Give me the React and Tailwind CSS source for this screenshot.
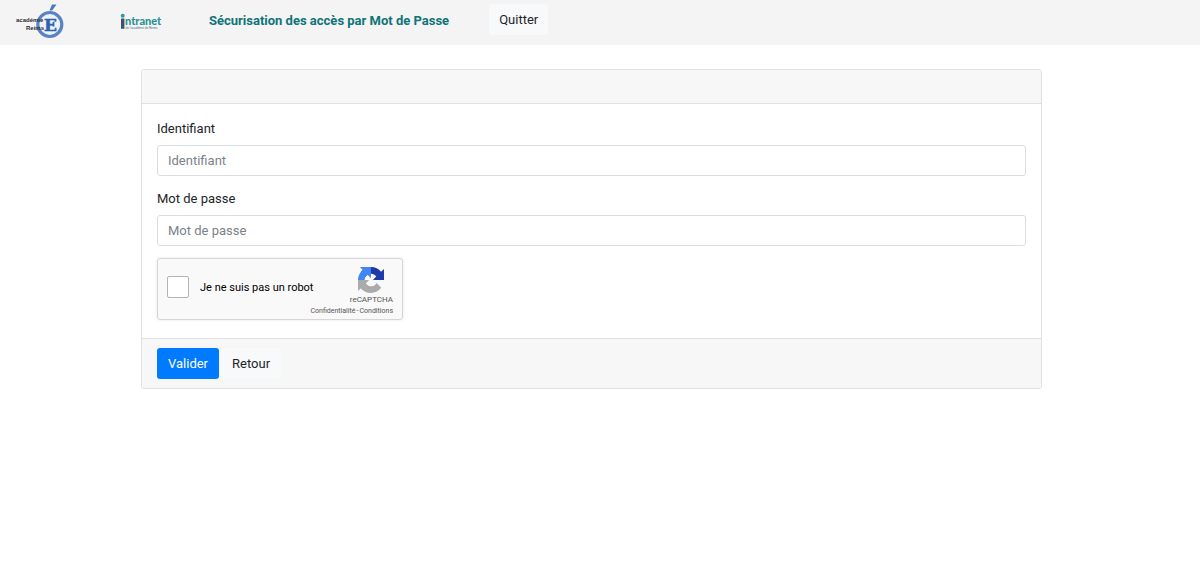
function AcademieLogo() {
  return (
    <svg width="52" height="38" viewBox="0 0 52 38" role="img" aria-label="académie Reims">
      <circle cx="33.8" cy="20.5" r="12" fill="#eef3fa" stroke="#5a82c4" strokeWidth="3.2" />
      <path d="M33.5 6.5 L36 0.4 H40.5 L36.2 6.5 Z" fill="#4d79bf" />
      <text x="28" y="27" fontFamily="'DejaVu Serif', serif" fontWeight="700" fontSize="17" fill="#2f61ad" stroke="#2f61ad" strokeWidth="0.5">E</text>
      <g fontFamily="'Liberation Sans Narrow', 'Liberation Sans', sans-serif" fontWeight="700" fontSize="6" fill="#2b2b30">
        <text x="0" y="18">académie</text>
        <text x="10" y="26">Reims</text>
      </g>
    </svg>
  );
}

function IntranetLogo() {
  return (
    <svg width="44" height="18" viewBox="0 0 44 18" role="img" aria-label="intranet de l'académie de Reims">
      <circle cx="2.7" cy="2.7" r="2" fill="#2a9a9c" />
      <path d="M1 5.5 H4.4 V15.8 H1 Z" fill="#3c5070" />
      <text x="5" y="12" fontFamily="Lato, sans-serif" fontWeight="900" fontSize="11" fill="#2a9294">ntranet</text>
      <text x="5.5" y="16" fontFamily="'Liberation Sans', sans-serif" fontSize="3" fill="#3f6f80">de l'académie de Reims</text>
    </svg>
  );
}

function RecaptchaLogo() {
  return (
    <svg width="26" height="26" viewBox="0 0 64 64" aria-hidden="true">
      <path fill="#1c3aa9" d="M64 31.955l-.033-1.37V4.687l-7.16 7.16C50.948 4.674 42.033.093 32.05.093c-10.4 0-19.622 4.96-25.458 12.64l11.736 11.86a15.55 15.55 0 0 1 4.754-5.334c2.05-1.6 4.952-2.906 8.968-2.906.485 0 .86.057 1.135.163 4.976.393 9.288 3.14 11.828 7.124l-8.307 8.307L64 31.953" />
      <path fill="#4285f4" d="M31.862.094l-1.37.033H4.594l7.16 7.16C4.58 13.147 0 22.06 0 32.046c0 10.4 4.96 19.622 12.64 25.458L24.5 45.768a15.55 15.55 0 0 1-5.334-4.754c-1.6-2.05-2.906-4.952-2.906-8.968 0-.485.057-.86.163-1.135.393-4.976 3.14-9.288 7.124-11.828l8.307 8.307L31.86.095" />
      <path fill="#ababab" d="M.001 32.045l.033 1.37v25.898l7.16-7.16c5.86 7.173 14.774 11.754 24.76 11.754 10.4 0 19.622-4.96 25.458-12.64l-11.736-11.86a15.55 15.55 0 0 1-4.754 5.334c-2.05 1.6-4.952 2.906-8.968 2.906-.485 0-.86-.057-1.135-.163-4.976-.393-9.288-3.14-11.828-7.124l8.307-8.307c-10.522.04-22.4.066-27.295-.005" />
    </svg>
  );
}

function Field({ id, label, type }) {
  return (
    <div className="flex flex-col gap-2">
      <label htmlFor={id} className="leading-[17px]">{label}</label>
      <input
        id={id}
        type={type}
        placeholder={label}
        className="h-[31px] w-full rounded-[3px] border border-[#d9dde1] bg-white px-2.5 placeholder:text-[#7b8289]"
      />
    </div>
  );
}

function Recaptcha() {
  return (
    <div className="flex h-[62px] w-[246px] items-start rounded-[3px] border border-[#d6d6d6] bg-[#f9f9f9] px-[9px] shadow-[0_0_3px_rgba(0,0,0,0.1)]">
      <input
        id="robot"
        type="checkbox"
        className="mr-[11px] mt-[17px] h-[22px] w-[22px] shrink-0 appearance-none rounded-xs border border-[#b4b4b4] bg-white"
      />
      <label htmlFor="robot" className="mt-[17px] grow whitespace-nowrap text-[11px] leading-6 text-black">Je ne suis pas un robot</label>
      <div className="flex w-0 flex-col items-end pt-2 text-[#555]">
        <div className="flex flex-col items-center">
          <RecaptchaLogo />
          <span className="text-[8px] leading-[14px]">reCAPTCHA</span>
        </div>
        <div className="flex gap-px whitespace-nowrap text-[7px] leading-[8px]">
          <a href="#confidentialite">Confidentialité</a>
          <span>-</span>
          <a href="#conditions">Conditions</a>
        </div>
      </div>
    </div>
  );
}

export default function App() {
  return (
    <div className="min-h-screen bg-white font-['Roboto',sans-serif] text-[13px] text-[#212529]">
      <header className="flex h-[45px] items-start bg-[#f4f4f4] pl-4 pt-1">
        <a href="#academie" className="mr-[52px] shrink-0"><AcademieLogo /></a>
        <a href="#intranet" className="mr-[45px] mt-[9px] shrink-0"><IntranetLogo /></a>
        <h1 className="mr-10 whitespace-nowrap text-[13px] font-bold leading-[33px] text-[#0f7378]">
          Sécurisation des accès par Mot de Passe
        </h1>
        <button type="button" className="h-[31px] rounded-[3px] bg-[#f8f9fa] px-[10px]">Quitter</button>
      </header>

      <main className="pl-[141px] pr-[158px] pt-6">
        <form className="overflow-hidden rounded-[3px] border border-[#e0e0e0]" onSubmit={(e) => e.preventDefault()}>
          <div className="h-[34px] border-b border-[#e0e0e0] bg-[#f7f7f7]" />
          <div className="flex flex-col gap-3 px-[15px] pb-[18px] pt-4">
            <div className="flex flex-col gap-[14px]">
              <Field id="identifiant" label="Identifiant" type="text" />
              <Field id="motdepasse" label="Mot de passe" type="password" />
            </div>
            <Recaptcha />
          </div>
          <div className="flex gap-[2px] border-t border-[#e0e0e0] bg-[#f7f7f7] px-[15px] py-[9px]">
            <button type="submit" className="h-[31px] rounded-[3px] bg-[#007bff] px-[11px] text-white">Valider</button>
            <button type="button" className="h-[31px] rounded-[3px] bg-[#f8f9fa] px-[11px]">Retour</button>
          </div>
        </form>
      </main>
    </div>
  );
}
